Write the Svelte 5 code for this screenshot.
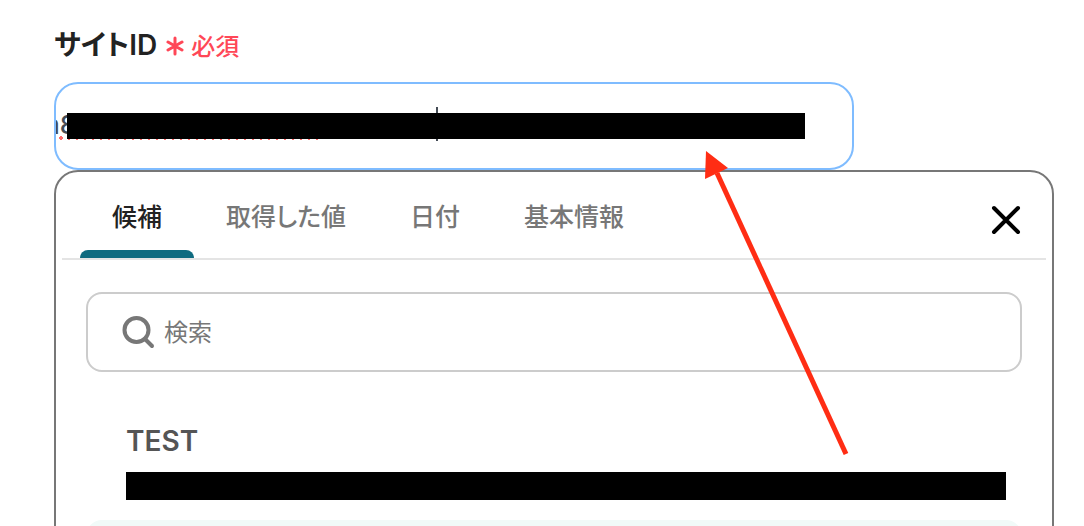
<script>
  let tabs = ['候補', '取得した値', '日付', '基本情報']
  let active = $state(0)
  let open = $state(true)
  let siteId = $state('a8')
  let keyword = $state('')
</script>

<main class="page">
  <div class="heading">
    <label for="site-id">サイトID</label>
    <span class="required">
      <svg width="18" height="20" viewBox="0 0 18 20"><path d="M9 2V18M2 6L16 14M16 6L2 14"/></svg>
      必須
    </span>
  </div>

  <div class="field">
    <input id="site-id" type="text" spellcheck="false" required bind:value={siteId}>
    <span class="spelling"></span>
    <span class="caret"></span>
    <span class="mask"></span>
  </div>

  {#if open}
    <section class="panel">
      <div class="tabs">
        <div class="tablist" role="tablist">
          {#each tabs as tab, i}
            <button class="tab" class:active={i === active} role="tab" aria-selected={i === active} onclick={() => active = i}>{tab}</button>
          {/each}
        </div>
        <button class="close" aria-label="閉じる" onclick={() => open = false}>
          <svg width="32" height="32" viewBox="0 0 32 32"><path d="M4 4L28 28M28 4L4 28"/></svg>
        </button>
      </div>

      <div class="body">
        <div class="search">
          <svg width="36" height="36" viewBox="0 0 36 36"><circle cx="16.5" cy="16" r="12"/><path d="M25 25L32 32"/></svg>
          <input type="search" aria-label="検索" placeholder="検索" bind:value={keyword}>
        </div>

        <ul class="options">
          <li>
            <button class="option">
              <span class="name">TEST</span>
              <span class="value"></span>
            </button>
          </li>
          <li><button class="option selected" aria-label="選択中"></button></li>
        </ul>
      </div>
    </section>
  {/if}

  <svg class="arrow" width="148" height="310" viewBox="0 0 148 310">
    <path d="M14 22L143 303" fill="none" stroke="#ff2d14" stroke-width="5"/>
    <path d="M3 0L25 17L2 28Z" fill="#ff2d14"/>
  </svg>
</main>

<style>
  :global(body) {
    margin: 0;
    background: #fff;
  }

  .page {
    position: relative;
    box-sizing: border-box;
    height: 100vh;
    padding: 22px 30px 0 54px;
    overflow: hidden;
    font-family: Inter, "Noto Sans CJK JP", sans-serif;
    font-feature-settings: "palt";
    color: #222;
  }

  button,
  input {
    padding: 0;
    border: 0;
    background: none;
    font: inherit;
    font-feature-settings: inherit;
    color: inherit;
    outline: none;
  }

  svg {
    flex-shrink: 0;
  }

  .heading {
    display: flex;
    align-items: center;
    gap: 9px;
    height: 42px;
    margin-bottom: 18px;
    font-size: 28px;
    font-weight: 600;
  }

  .required {
    display: flex;
    align-items: center;
    gap: 7px;
    padding-top: 2px;
    font-size: 24px;
    font-weight: 500;
    color: #ff4757;
  }

  .required svg {
    margin-top: 4px;
  }

  .required path {
    fill: none;
    stroke: #ff4757;
    stroke-width: 3;
    stroke-linecap: round;
  }

  .field {
    position: relative;
    box-sizing: border-box;
    width: 80%;
    height: 88px;
    border: 2px solid #7fbcff;
    border-radius: 24px;
    overflow: hidden;
  }

  .field input {
    box-sizing: border-box;
    width: 100%;
    height: 100%;
    padding-bottom: 4px;
    font-size: 26px;
    font-weight: 500;
    text-indent: -11px;
    color: #444b55;
  }

  .spelling {
    position: absolute;
    left: 3px;
    top: 52px;
    width: 260px;
    height: 4px;
    background: radial-gradient(circle, #ff6b6b 2px, transparent 2px) -2px 0 / 8px 4px;
  }

  .caret {
    position: absolute;
    left: 380px;
    top: 23px;
    width: 2px;
    height: 34px;
    background: #444b55;
  }

  .mask {
    position: absolute;
    left: 11px;
    right: 47px;
    top: 29px;
    height: 26px;
    background: #000;
  }

  .panel {
    border: 2px solid #777;
    border-radius: 24px;
  }

  .tabs {
    display: flex;
    justify-content: space-between;
    height: 86px;
    margin: 0 6px;
    padding: 0 24px 0 18px;
    border-bottom: 2px solid #e4e4e4;
  }

  .tablist {
    display: flex;
  }

  .tab {
    display: flex;
    flex-direction: column;
    justify-content: flex-end;
    padding: 0 32px;
    font-size: 25px;
    font-weight: 500;
    line-height: 34px;
    color: #777;
    cursor: pointer;
  }

  .tab::after {
    content: "";
    height: 8px;
    margin: 16px -32px 0;
    border-radius: 8px 8px 0 0;
  }

  .tab.active {
    color: #222;
  }

  .tab.active::after {
    background: #0f6b80;
  }

  .close {
    display: flex;
    align-items: center;
    padding-top: 10px;
    cursor: pointer;
  }

  .close path {
    fill: none;
    stroke: #000;
    stroke-width: 4;
    stroke-linecap: round;
  }

  .body {
    padding: 32px 30px;
  }

  .search {
    display: flex;
    align-items: center;
    gap: 8px;
    box-sizing: border-box;
    height: 80px;
    padding: 0 32px;
    border: 2px solid #ccc;
    border-radius: 16px;
  }

  .search svg {
    fill: none;
    stroke: #777;
    stroke-width: 4;
    stroke-linecap: round;
  }

  .search input {
    flex: 1;
    min-width: 0;
    font-size: 24px;
  }

  .search input::placeholder {
    color: #777;
    opacity: 1;
  }

  .options {
    margin: 32px 0 0;
    padding: 0;
    list-style: none;
  }

  .option {
    display: flex;
    flex-direction: column;
    gap: 12px;
    box-sizing: border-box;
    width: 100%;
    min-height: 116px;
    padding: 18px 16px 20px 40px;
    border-radius: 16px;
    text-align: left;
    cursor: pointer;
  }

  .option.selected {
    background: #f1faf8;
  }

  .name {
    font-size: 28px;
    font-weight: 600;
    line-height: 38px;
    color: #555;
  }

  .value {
    align-self: stretch;
    height: 28px;
    background: #000;
  }

  .arrow {
    position: absolute;
    left: 703px;
    top: 151px;
    pointer-events: none;
  }
</style>
